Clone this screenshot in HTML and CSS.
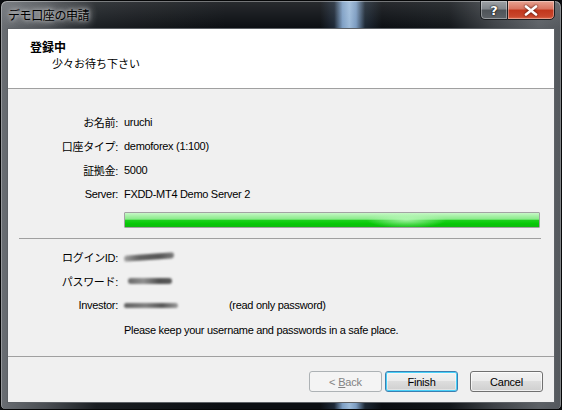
FILE: index.html
```html
<!DOCTYPE html>
<html lang="ja">
<head>
<meta charset="utf-8">
<title>デモ口座の申請</title>
<link rel="stylesheet" href="styles.css">
</head>
<body>
<div class="window">
  <div class="titlebar">
    <span class="title">デモ口座の申請</span>
    <div class="caption-buttons">
      <span class="cap-btn help">?</span>
      <span class="cap-btn close">
        <svg width="14" height="11" viewBox="0 0 14 11"><path d="M2 1.5 L12 9.5 M12 1.5 L2 9.5" stroke="#fff" stroke-width="2.6" stroke-linecap="round" fill="none"/></svg>
      </span>
    </div>
  </div>
  <div class="client">
    <div class="header">
      <div class="h-title">登録中</div>
      <div class="h-sub">少々お待ち下さい</div>
    </div>
    <div class="body">
      <div class="grid top-grid">
        <span class="lbl">お名前:</span><span class="val">uruchi</span>
        <span class="lbl">口座タイプ:</span><span class="val">demoforex (1:100)</span>
        <span class="lbl">証拠金:</span><span class="val">5000</span>
        <span class="lbl">Server:</span><span class="val">FXDD-MT4 Demo Server 2</span>
        <span></span><div class="progress"><div class="progress-fill"></div></div>
      </div>
      <div class="separator"></div>
      <div class="grid bottom-grid">
        <span class="lbl">ログインID:</span><span class="val"><span class="blur b1"></span></span>
        <span class="lbl">パスワード:</span><span class="val"><span class="blur b2"></span></span>
        <span class="lbl">Investor:</span><span class="val"><span class="blur-box"><span class="blur b3"></span></span><span>(read only password)</span></span>
        <span></span><span class="val">Please keep your username and passwords in a safe place.</span>
      </div>
    </div>
    <div class="footer">
      <button class="btn disabled">&lt; <u>B</u>ack</button>
      <button class="btn default">Finish</button>
      <button class="btn cancel">Cancel</button>
    </div>
  </div>
</div>
</body>
</html>
```
FILE: styles.css
```css
html, body {
  margin: 0;
  padding: 0;
}
body {
  width: 562px;
  height: 410px;
  background: #0b0d10;
  font-family: "Liberation Sans", "Noto Sans CJK JP", sans-serif;
  font-size: 11px;
  color: #000;
  overflow: hidden;
}
.window {
  width: 562px;
  height: 410px;
  box-sizing: border-box;
  border: 1px solid #050607;
  border-radius: 7px 7px 5px 5px;
  background:
    linear-gradient(180deg, rgba(255,255,255,0.12) 0, rgba(255,255,255,0) 28px),
    linear-gradient(90deg, #6a6e73 0%, #4a4e53 8%, #1a1e22 17%, #0b0e12 40%, #0b0e12 57%, #1d2836 59.5%, #7e9fc4 61%, #9cbad9 62.2%, #7b9bc0 63.4%, #1c2733 65%, #0b0e12 68%, #12161a 80%, #3d4146 88%, #5c6065 96%, #54585d 100%);
  box-shadow: inset 0 1px 0 rgba(255,255,255,0.35), inset 1px 0 0 rgba(255,255,255,0.3), inset -1px 0 0 rgba(255,255,255,0.25);
  display: flex;
  flex-direction: column;
  overflow: hidden;
}
.titlebar {
  height: 28px;
  display: flex;
  align-items: flex-start;
  justify-content: space-between;
  flex: none;
}
.title {
  margin: 6px 0 0 7px;
  font-family: "Noto Sans CJK JP", sans-serif;
  font-size: 12px;
  line-height: 16px;
  color: #000;
  letter-spacing: -0.4px;
  text-shadow: 0 0 4px rgba(255,255,255,0.8), 0 0 8px rgba(255,255,255,0.6), 0 0 12px rgba(255,255,255,0.4);
}
.caption-buttons {
  display: flex;
  margin-right: 6px;
  margin-top: -1px;
}
.cap-btn {
  height: 20px;
  box-sizing: border-box;
  border: 1px solid #1a1d20;
  display: flex;
  align-items: center;
  justify-content: center;
  color: #fff;
  font-family: "DejaVu Sans", sans-serif;
  font-weight: bold;
  font-size: 13px;
}
.help {
  width: 27px;
  border-right: none;
  border-radius: 0 0 0 5px;
  background: linear-gradient(180deg, #9ea2a6 0%, #80858a 45%, #4f5459 50%, #5d6267 100%);
  box-shadow: inset 0 0 0 1px rgba(255,255,255,0.35);
  text-shadow: 0 0 2px #000, 0 0 1px #000;
}
.close {
  width: 48px;
  border-radius: 0 0 5px 0;
  background: linear-gradient(180deg, #e7a392 0%, #d8735f 45%, #c2361c 50%, #c9462c 85%, #dd6a4c 100%);
  box-shadow: inset 0 0 0 1px rgba(255,255,255,0.35);
}
.close svg {
  filter: drop-shadow(0 0 1px #3a0a00);
}
.client {
  flex: 1;
  margin: 0 7px 7px 7px;
  background: #f0f0f0;
  display: flex;
  flex-direction: column;
  box-shadow: 0 0 0 1px #5d6166;
}
.header {
  background: #fff;
  border-bottom: 1px solid #a0a0a0;
  flex: none;
  padding-top: 10px;
  height: 49px;
  font-family: "Noto Sans CJK JP", sans-serif;
}
.h-title {
  margin-left: 22px;
  font-weight: bold;
  font-size: 12px;
  line-height: 16px;
}
.h-sub {
  margin-left: 44px;
  font-size: 11px;
  line-height: 16px;
}
.body {
  flex: 1;
  display: flex;
  flex-direction: column;
  padding-top: 21px;
}
.grid {
  display: grid;
  grid-template-columns: 110px 1fr;
  column-gap: 6px;
  grid-auto-rows: 24px;
  align-items: center;
}
.lbl {
  text-align: right;
  letter-spacing: -0.3px;
  white-space: nowrap;
}
.val {
  letter-spacing: -0.3px;
  white-space: nowrap;
  display: flex;
  align-items: center;
}
.top-grid {
  grid-template-rows: 24px 24px 24px 24px 22px;
}
.progress {
  width: 416px;
  height: 16px;
  box-sizing: border-box;
  border: 1px solid #a3a3a3;
  border-radius: 1px;
  background: #e8e8e8;
  align-self: end;
}
.progress-fill {
  height: 100%;
  background:
    radial-gradient(ellipse 40px 8px at 68% 50%, rgba(190,250,190,0.8), rgba(190,250,190,0) 100%),
    linear-gradient(180deg, #c8f7c8 0%, #a2f0a2 25%, #8ae98a 45%, #1ed21e 50%, #06c806 78%, #12b812 100%);
}
.separator {
  height: 1px;
  background: #a0a0a0;
  margin: 10px 13px 0 11px;
  flex: none;
}
.bottom-grid {
  margin-top: 6px;
  grid-template-rows: 24px 24px 24px 26px;
}
.blur {
  display: inline-block;
  height: 6px;
  border-radius: 3px;
  filter: blur(1.3px);
}
.b1 {
  width: 50px;
  background: linear-gradient(90deg, #a0a0a0, #626262 30%, #555 70%, #7a7a7a);
  transform: skewY(-4deg);
}
.b2 {
  width: 44px;
  margin-left: 4px;
  background: linear-gradient(90deg, #6a6a6a, #909090 35%, #505050 70%, #5a5a5a);
}
.b3 {
  width: 54px;
  height: 5px;
  background: linear-gradient(90deg, #606060, #808080 40%, #555 70%, #999);
}
.blur-box {
  width: 105px;
  display: inline-flex;
  align-items: center;
}
.footer {
  flex: none;
  height: 46px;
  border-top: 1px solid #a0a0a0;
  display: flex;
  justify-content: flex-end;
  align-items: flex-start;
  padding: 14px 11px 0 0;
  box-sizing: border-box;
  gap: 3px;
}
.btn {
  width: 73px;
  height: 21px;
  box-sizing: border-box;
  border: 1px solid #707070;
  border-radius: 3px;
  background: linear-gradient(180deg, #f2f2f2 0%, #ebebeb 45%, #dddddd 50%, #cfcfcf 100%);
  box-shadow: inset 0 0 0 1px rgba(255,255,255,0.7);
  font-family: "Liberation Sans", sans-serif;
  font-size: 11px;
  letter-spacing: -0.2px;
  color: #000;
  padding: 0;
}
.btn.disabled {
  border-color: #adb2b5;
  background: #f4f4f4;
  color: #838383;
  box-shadow: none;
}
.btn.default {
  border-color: #3c7fb1;
  box-shadow: inset 0 0 0 1px #48d0f8, inset 0 0 0 2px rgba(255,255,255,0.4);
}
.btn.cancel {
  margin-left: 9px;
}
```
